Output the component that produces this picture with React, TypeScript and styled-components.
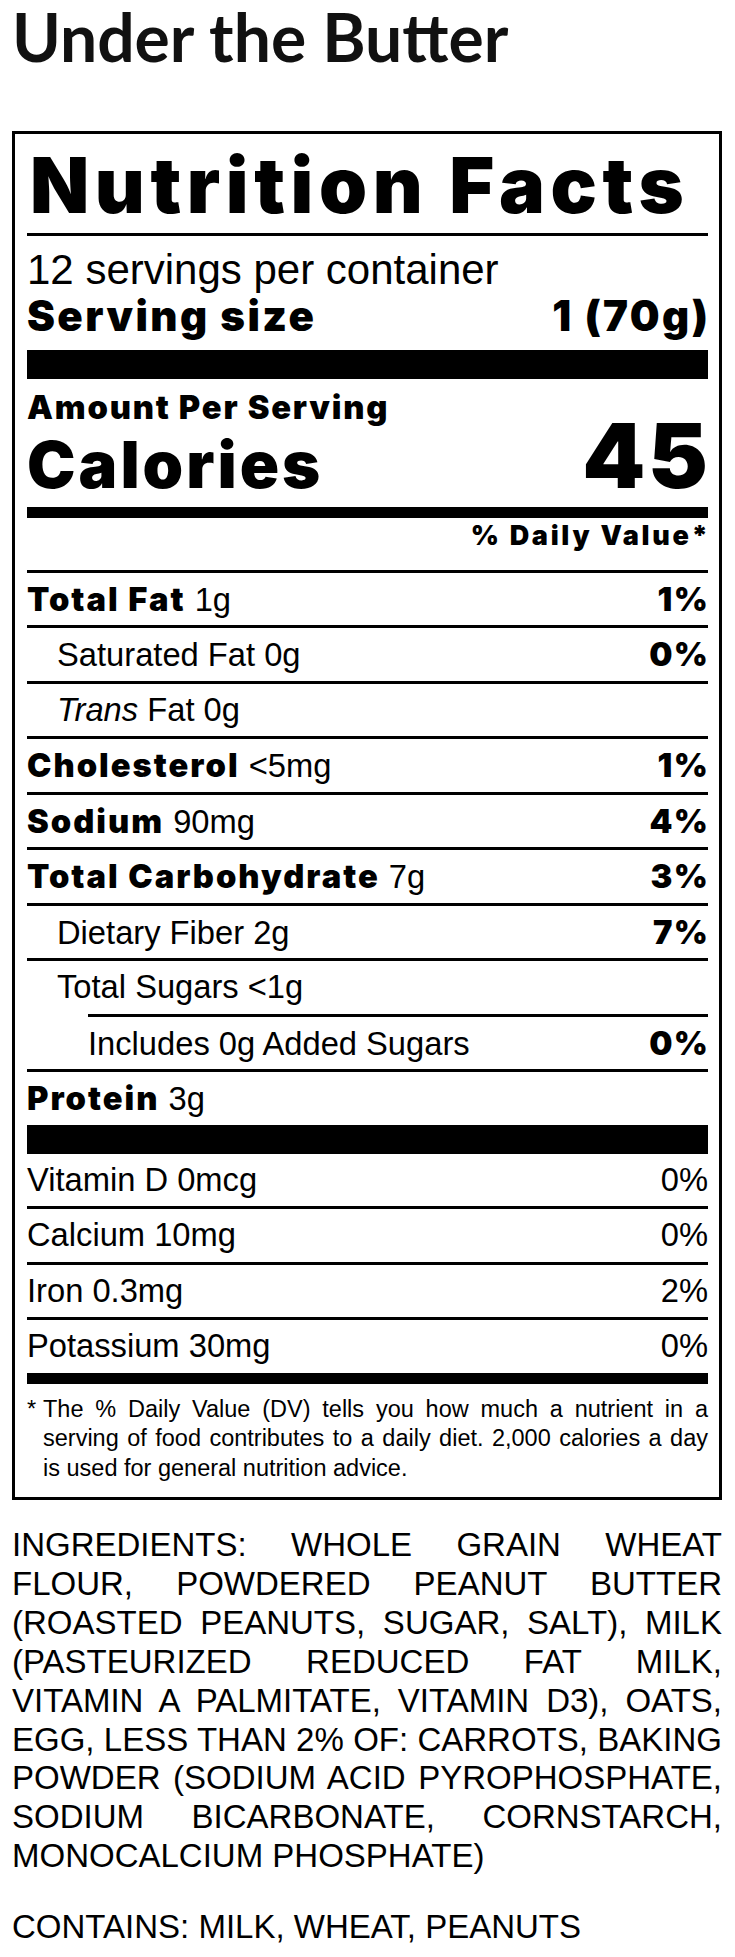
import React from "react";
import styled, { createGlobalStyle } from "styled-components";

const GlobalStyle = createGlobalStyle`
  html, body { margin: 0; padding: 0; background: #fff; }
  body {
    font-family: "Liberation Sans", Arial, sans-serif;
    color: #000;
  }
`;

const HEAVY = `"Inter", "Liberation Sans", Arial, sans-serif`;

const Page = styled.div`
  width: 735px;
  box-sizing: border-box;
  padding: 4px 13px 9px 12px;
`;

const ProductTitle = styled.h1`
  margin: 0 0 61px;
  font-family: "Lato", "Liberation Sans", sans-serif;
  font-weight: 700;
  font-size: 66px;
  line-height: 66px;
  color: #111;
`;

const Label = styled.section`
  border: 3px solid #000;
  padding: 0 11px 14px 12px;
`;

const LabelTitle = styled.h2`
  margin: 0;
  padding: 11px 0 8px 3px;
  border-bottom: 3px solid #000;
  font-family: ${HEAVY};
  font-weight: 900;
  font-size: 77px;
  line-height: 80px;
  letter-spacing: 5.6px;
  white-space: nowrap;
`;

const ServingBlock = styled.div`
  padding: 11px 0 11px;
`;

const ServingsLine = styled.div`
  font-size: 42px;
  line-height: 46px;
`;

const ServingSizeLine = styled.div`
  display: flex;
  justify-content: space-between;
  font-family: ${HEAVY};
  font-weight: 900;
  font-size: 42px;
  line-height: 46px;
  letter-spacing: 2.4px;
  margin-right: -2.4px;
`;

const Bar = styled.div<{ $h: number }>`
  height: ${(p) => p.$h}px;
  background: #000;
`;

const AmountLabel = styled.div`
  margin-top: 11px;
  font-family: ${HEAVY};
  font-weight: 900;
  font-size: 32.7px;
  line-height: 34px;
  letter-spacing: 1.8px;
`;

const CaloriesRow = styled.div`
  display: flex;
  justify-content: space-between;
  align-items: baseline;
  padding-bottom: 19px;
  font-family: ${HEAVY};
  font-weight: 900;
`;

const CaloriesLabel = styled.span`
  font-size: 65px;
  line-height: 0.7;
  letter-spacing: 3px;
`;

const CaloriesValue = styled.span`
  font-size: 90px;
  line-height: 0.7;
  letter-spacing: 2.5px;
  margin-right: -2.5px;
`;

const DailyValueHead = styled.div`
  padding: 3px 0 19px;
  text-align: right;
  font-family: ${HEAVY};
  font-weight: 900;
  font-size: 27px;
  line-height: 30px;
  letter-spacing: 2.7px;
  margin-right: -2.7px;
`;

const Row = styled.div<{ $indent?: number; $inset?: number; $plain?: boolean }>`
  box-sizing: border-box;
  height: ${(p) => (p.$plain ? 52.5 : 55.5)}px;
  margin-left: ${(p) => p.$inset ?? 0}px;
  padding-left: ${(p) => p.$indent ?? 0}px;
  border-top: ${(p) => (p.$plain ? "none" : "3px solid #000")};
  display: flex;
  justify-content: space-between;
  align-items: baseline;
  font-size: 32.7px;
  line-height: 52.5px;
  white-space: nowrap;
`;

const Strong = styled.b`
  font-family: ${HEAVY};
  font-weight: 900;
  letter-spacing: 2px;
`;

const DailyPercent = styled.span<{ $bold?: boolean }>`
  font-family: ${(p) => (p.$bold ? HEAVY : "inherit")};
  font-weight: ${(p) => (p.$bold ? 900 : 400)};
  letter-spacing: ${(p) => (p.$bold ? 1.5 : 0)}px;
  margin-right: ${(p) => (p.$bold ? -1.5 : 0)}px;
`;

const Em = styled.i`
  font-style: italic;
`;

const Footnote = styled.div`
  display: flex;
  padding-top: 11px;
  font-size: 23.5px;
  line-height: 29.5px;
`;

const Star = styled.span`
  flex: 0 0 16px;
`;

const FootText = styled.p`
  margin: 0;
  flex: 1;
  text-align: justify;
`;

const Ingredients = styled.p<{ $gap: number }>`
  margin: ${(p) => p.$gap}px 0 0;
  font-size: 33px;
  line-height: 38.9px;
  text-align: justify;
`;

type Nutrient = {
  name: string;
  amount: string;
  dv?: string;
  bold?: boolean;
  italicName?: string;
  indent?: number;
  inset?: number;
};

const nutrients: Nutrient[] = [
  { name: "Total Fat", amount: "1g", dv: "1%", bold: true },
  { name: "Saturated Fat", amount: "0g", dv: "0%", indent: 30 },
  { name: "Fat", italicName: "Trans", amount: "0g", indent: 30 },
  { name: "Cholesterol", amount: "<5mg", dv: "1%", bold: true },
  { name: "Sodium", amount: "90mg", dv: "4%", bold: true },
  { name: "Total Carbohydrate", amount: "7g", dv: "3%", bold: true },
  { name: "Dietary Fiber", amount: "2g", dv: "7%", indent: 30 },
  { name: "Total Sugars", amount: "<1g", indent: 30 },
  { name: "Includes 0g Added Sugars", amount: "", dv: "0%", inset: 61 },
  { name: "Protein", amount: "3g", bold: true },
];

const vitamins = [
  { name: "Vitamin D", amount: "0mcg", dv: "0%" },
  { name: "Calcium", amount: "10mg", dv: "0%" },
  { name: "Iron", amount: "0.3mg", dv: "2%" },
  { name: "Potassium", amount: "30mg", dv: "0%" },
];

export default function App() {
  return (
    <>
      <GlobalStyle />
      <Page>
        <ProductTitle>Under the Butter</ProductTitle>
        <Label>
          <LabelTitle>Nutrition Facts</LabelTitle>
          <ServingBlock>
            <ServingsLine>12 servings per container</ServingsLine>
            <ServingSizeLine>
              <span>Serving size</span>
              <span>1 (70g)</span>
            </ServingSizeLine>
          </ServingBlock>
          <Bar $h={29} />
          <AmountLabel>Amount Per Serving</AmountLabel>
          <CaloriesRow>
            <CaloriesLabel>Calories</CaloriesLabel>
            <CaloriesValue>45</CaloriesValue>
          </CaloriesRow>
          <Bar $h={11} />
          <DailyValueHead>% Daily Value*</DailyValueHead>
          {nutrients.map((n) => (
            <Row key={n.name + n.amount} $indent={n.indent} $inset={n.inset}>
              <span>
                {n.bold ? <Strong>{n.name}</Strong> : null}
                {!n.bold && n.italicName ? (
                  <>
                    <Em>{n.italicName}</Em> {n.name}
                  </>
                ) : null}
                {!n.bold && !n.italicName ? n.name : null}
                {n.amount ? ` ${n.amount}` : ""}
              </span>
              {n.dv ? <DailyPercent $bold>{n.dv}</DailyPercent> : null}
            </Row>
          ))}
          <Bar $h={29} />
          {vitamins.map((v, i) => (
            <Row key={v.name} $plain={i === 0}>
              <span>
                {v.name} {v.amount}
              </span>
              <DailyPercent>{v.dv}</DailyPercent>
            </Row>
          ))}
          <Bar $h={11} />
          <Footnote>
            <Star>*</Star>
            <FootText>
              The % Daily Value (DV) tells you how much a nutrient in a serving of food
              contributes to a daily diet. 2,000 calories a day is used for general
              nutrition advice.
            </FootText>
          </Footnote>
        </Label>
        <Ingredients $gap={26}>
          INGREDIENTS: WHOLE GRAIN WHEAT FLOUR, POWDERED PEANUT BUTTER (ROASTED PEANUTS,
          SUGAR, SALT), MILK (PASTEURIZED REDUCED FAT MILK, VITAMIN A PALMITATE, VITAMIN
          D3), OATS, EGG, LESS THAN 2% OF: CARROTS, BAKING POWDER (SODIUM ACID
          PYROPHOSPHATE, SODIUM BICARBONATE, CORNSTARCH, MONOCALCIUM PHOSPHATE)
        </Ingredients>
        <Ingredients $gap={32}>CONTAINS: MILK, WHEAT, PEANUTS</Ingredients>
      </Page>
    </>
  );
}
